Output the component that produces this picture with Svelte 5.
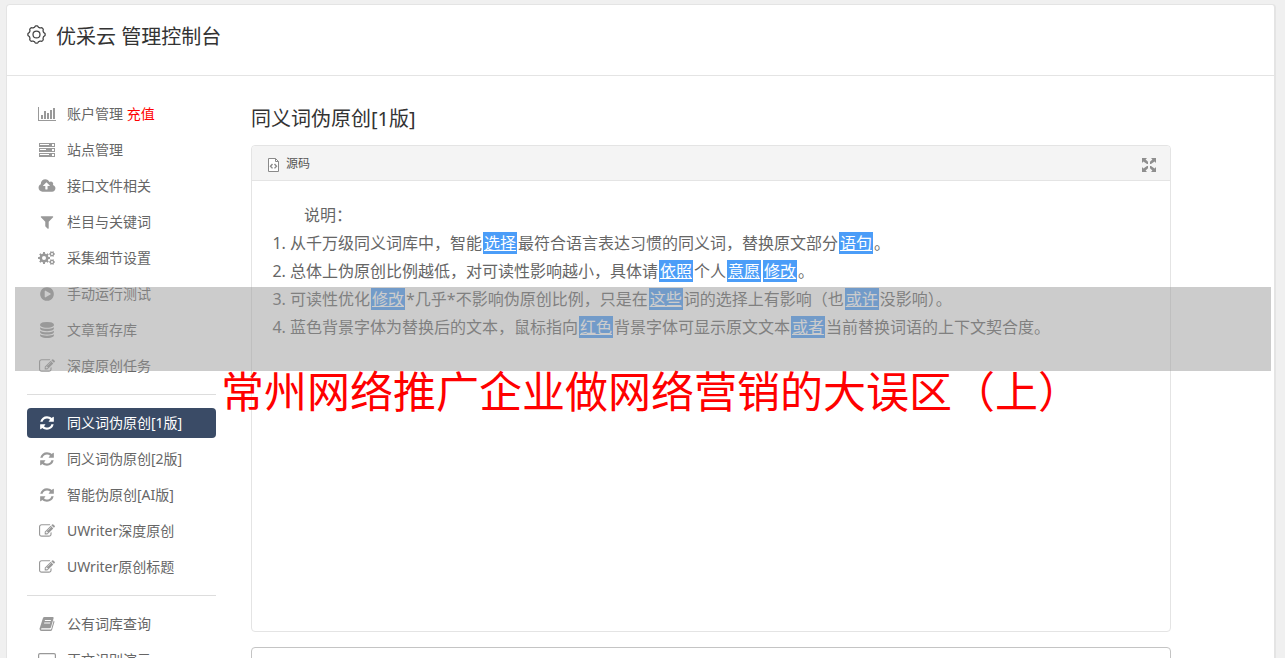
<script lang="ts">
	interface NavItem {
		icon: string;
		label: string;
		tag?: string;
		active?: boolean;
	}

	const groups: NavItem[][] = [
		[
			{ icon: 'chart', label: '账户管理', tag: '充值' },
			{ icon: 'server', label: '站点管理' },
			{ icon: 'upload', label: '接口文件相关' },
			{ icon: 'filter', label: '栏目与关键词' },
			{ icon: 'cogs', label: '采集细节设置' },
			{ icon: 'play', label: '手动运行测试' },
			{ icon: 'database', label: '文章暂存库' },
			{ icon: 'edit', label: '深度原创任务' }
		],
		[
			{ icon: 'refresh', label: '同义词伪原创[1版]', active: true },
			{ icon: 'refresh', label: '同义词伪原创[2版]' },
			{ icon: 'refresh', label: '智能伪原创[AI版]' },
			{ icon: 'edit', label: 'UWriter深度原创' },
			{ icon: 'edit', label: 'UWriter原创标题' }
		],
		[
			{ icon: 'book', label: '公有词库查询' },
			{ icon: 'laptop', label: '正文识别演示' }
		]
	];

	// odd parts are the replaced words
	const notes: string[][] = [
		['从千万级同义词库中，智能', '选择', '最符合语言表达习惯的同义词，替换原文部分', '语句', '。'],
		['总体上伪原创比例越低，对可读性影响越小，具体请', '依照', '个人', '意愿', '', '修改', '。'],
		['可读性优化', '修改', '*几乎*不影响伪原创比例，只是在', '这些', '词的选择上有影响（也', '或许', '没影响）。'],
		['蓝色背景字体为替换后的文本，鼠标指向', '红色', '背景字体可显示原文文本', '或者', '当前替换词语的上下文契合度。']
	];

	const icons: Record<string, { box: string; width: number; d: string }> = {
		chart: {
			box: '0 0 18 16',
			width: 18,
			d: 'M0 1h1v13h17v1H0zM3 9h2v4H3zM6 5h2v8H6zM9 7h2v6H9zM12 4h2v9h-2zM15 2h2v11h-2z'
		},
		server: {
			box: '0 0 16 16',
			width: 16,
			d: 'M0 1h16v4H0zM1 2v1h9V2zM13 2v2h2V2zM0 6h16v4H0zM1 7v1h6V7zM13 7v2h2V7zM0 11h16v4H0zM1 12v1h9v-1zM13 12v2h2v-2z'
		},
		upload: {
			box: '0 0 2048 1792',
			width: 18,
			d: 'M1344 864q0-14-9-23l-352-352q-9-9-23-9t-23 9l-351 351q-10 12-10 24 0 14 9 23t23 9h224v352q0 13 9.5 22.5t22.5 9.5h192q13 0 22.5-9.5t9.5-22.5v-352h224q13 0 22.5-9.5t9.5-22.5zm640 288q0 159-112.5 271.5t-271.5 112.5h-1088q-185 0-316.5-131.5t-131.5-316.5q0-130 70-240t188-165q-2-30-2-43 0-212 150-362t362-150q156 0 285.5 87t188.5 231q71-62 166-62 106 0 181 75t75 181q0 76-41 138 130 31 213.5 135.5t83.5 238.5z'
		},
		filter: {
			box: '0 0 1792 1792',
			width: 16,
			d: 'M1595 295q17 41-14 70l-493 493v742q0 42-39 59-13 5-25 5-27 0-45-19l-256-256q-19-19-19-45v-486l-493-493q-31-29-14-70 17-39 59-39h1280q42 0 59 39z'
		},
		cogs: {
			box: '0 0 18 16',
			width: 18,
			d: [
				cog(6, 8, 6, 8), ring(6, 8, 2),
				cog(14, 4, 3, 6), ring(14, 4, 1),
				cog(14, 12, 3, 6), ring(14, 12, 1)
			].join('')
		},
		play: {
			box: '0 0 1792 1792',
			width: 16,
			d: 'M896 128q209 0 385.5 103t279.5 279.5 103 385.5-103 385.5-279.5 279.5-385.5 103-385.5-103-279.5-279.5-103-385.5 103-385.5 279.5-279.5 385.5-103zm384 823q32-18 32-55t-32-55l-544-320q-31-19-64-1-32 19-32 56v640q0 37 32 56 16 8 32 8 17 0 32-9z'
		},
		database: {
			box: '0 0 1792 1792',
			width: 16,
			d: 'M896 768q237 0 443-43t325-127v170q0 69-103 128t-280 93.5-385 34.5-385-34.5-280-93.5-103-128v-170q119 84 325 127t443 43zm0 768q237 0 443-43t325-127v170q0 69-103 128t-280 93.5-385 34.5-385-34.5-280-93.5-103-128v-170q119 84 325 127t443 43zm0-384q237 0 443-43t325-127v170q0 69-103 128t-280 93.5-385 34.5-385-34.5-280-93.5-103-128v-170q119 84 325 127t443 43zm0-1152q208 0 385 34.5t280 93.5 103 128v128q0 69-103 128t-280 93.5-385 34.5-385-34.5-280-93.5-103-128v-128q0-69 103-128t280-93.5 385-34.5z'
		},
		edit: {
			box: '0 0 1792 1792',
			width: 18,
			d: 'M888 1184l116-116-152-152-116 116v56h96v96h56zm440-720q-16-16-33 1l-350 350q-17 17-1 33t33-1l350-350q17-17 1-33zm80 594v190q0 119-84.5 203.5t-203.5 84.5h-832q-119 0-203.5-84.5t-84.5-203.5v-832q0-119 84.5-203.5t203.5-84.5h832q63 0 117 25 15 7 18 23 3 17-9 29l-49 49q-14 14-32 8-23-6-45-6h-832q-66 0-113 47t-47 113v832q0 66 47 113t113 47h832q66 0 113-47t47-113v-126q0-13 9-22l64-64q15-15 35-7t20 29zm-96-738l288 288-672 672h-288v-288zm444 132l-92 92-288-288 92-92q28-28 68-28t68 28l152 152q28 28 28 68t-28 68z'
		},
		refresh: {
			box: '0 0 1792 1792',
			width: 16,
			d: 'M1639 1056q0 5-1 7-64 268-268 434.5t-478 166.5q-146 0-282.5-55t-243.5-157l-129 129q-19 19-45 19t-45-19-19-45v-448q0-26 19-45t45-19h448q26 0 45 19t19 45-19 45l-137 137q71 66 161 102t187 36q134 0 250-65t186-179q11-17 53-117 8-23 30-23h192q13 0 22.5 9.5t9.5 22.5zm25-800v448q0 26-19 45t-45 19h-448q-26 0-45-19t-19-45 19-45l138-138q-148-137-349-137-134 0-250 65t-186 179q-11 17-53 117-8 23-30 23h-199q-13 0-22.5-9.5t-9.5-22.5v-7q65-268 270-434.5t480-166.5q146 0 284 55.5t245 156.5l130-129q19-19 45-19t45 19 19 45z'
		},
		book: {
			box: '0 0 16 16',
			width: 16,
			d: 'M5.5 1h8.2q1.2 0 .9 1.2L12 11.3q-.3 1-1.4 1H3q-1 0-1 .6t1 .7h8.5q.6 0 .8-.6l2.4-8.5q1 .5.7 1.5l-2.3 7.8q-.4 1.2-1.6 1.2H2.6Q.5 15 .5 12.8L3.8 2.4Q4.2 1 5.500 1zM6 4l-.3 1h6l.3-1zM5.3 6.5l-.3 1h6l.3-1z'
		},
		laptop: {
			box: '0 0 18 16',
			width: 18,
			d: 'M2 1h14q2 0 2 2v8q0 2-2 2H2q-2 0-2-2V3q0-2 2-2zM2 2.2q-.8 0-.8.8v8q0 .8.8.8h14q.8 0 .8-.8V3q0-.8-.8-.8z'
		}
	};

	function point(cx: number, cy: number, r: number, a: number): string {
		return `${(cx + r * Math.cos(a)).toFixed(2)} ${(cy + r * Math.sin(a)).toFixed(2)}`;
	}

	function cog(cx: number, cy: number, r: number, teeth: number): string {
		const step = (Math.PI * 2) / teeth;
		const pts: string[] = [];
		for (let i = 0; i < teeth; i++) {
			const a = i * step;
			pts.push(point(cx, cy, r * 0.76, a - step * 0.28));
			pts.push(point(cx, cy, r, a - step * 0.2));
			pts.push(point(cx, cy, r, a + step * 0.2));
			pts.push(point(cx, cy, r * 0.76, a + step * 0.28));
		}
		return 'M' + pts.join('L') + 'z';
	}

	function ring(cx: number, cy: number, r: number): string {
		return `M${cx - r} ${cy}a${r} ${r} 0 1 0 ${r * 2} 0a${r} ${r} 0 1 0 ${-r * 2} 0z`;
	}

	// soft eight-lobed outline of the title gear
	function lobes(cx: number, cy: number, r: number): string {
		const pts: string[] = [];
		for (let i = 0; i < 96; i++) {
			const a = (i / 96) * Math.PI * 2;
			pts.push(point(cx, cy, r + 0.6 * Math.tanh(2 * Math.cos(8 * a)), a));
		}
		return 'M' + pts.join('L') + 'z';
	}

	let source = $state('');
</script>

<div class="page">
	<div class="card">
		<header>
			<svg class="gear" viewBox="0 0 18 18" width="19" height="19" aria-hidden="true">
				<path d={lobes(9, 9, 7.6)} />
				<circle cx="9" cy="9" r="3.3" />
			</svg>
			<h1>优采云 管理控制台</h1>
		</header>

		<div class="columns">
			<nav>
				{#each groups as group}
					<ul>
						{#each group as item}
							<li>
								<a href="#top" class:active={item.active}>
									<span class="icon">
										<svg viewBox={icons[item.icon].box} width={icons[item.icon].width} height="16" aria-hidden="true">
											<path d={icons[item.icon].d} fill="currentColor" fill-rule="evenodd" />
										</svg>
									</span>
									<span class="label">{item.label}{#if item.tag}&nbsp;<em>{item.tag}</em>{/if}</span>
								</a>
							</li>
						{/each}
					</ul>
				{/each}
			</nav>

			<main>
				<h2>同义词伪原创[1版]</h2>
				<section class="panel">
					<div class="toolbar">
						<button type="button">
							<svg viewBox="0 0 11 14" width="11" height="14" fill="none" stroke="#8a8a8a" aria-hidden="true">
								<path d="M.5.5h7l3 3v10H.5z" fill="#fff" />
								<path d="M7.5.5v3h3" />
								<path d="M4.5 6L2.5 8.2l2 2.2M6.5 6l2 2.2-2 2.2" stroke-width="1.4" />
							</svg>
							源码
						</button>
						<button type="button" aria-label="全屏">
							<svg viewBox="0 0 14 14" width="14" height="14" fill="#8e8e8e" aria-hidden="true">
								<path d="M0 0h5L3.6 1.4 6 3.8V6H5L1.4 3.6 0 5z" />
								<path d="M14 0H9l1.4 1.4L8 3.8V6h1l3.6-2.4L14 5z" />
								<path d="M0 14h5l-1.4-1.4L6 10.2V8H5l-3.6 2.4L0 9z" />
								<path d="M14 14H9l1.4-1.4L8 10.2V8h1l3.6 2.4L14 9z" />
							</svg>
						</button>
					</div>
					<div class="content">
						<p>说明：</p>
						<ol>
							{#each notes as parts}
								<li>{#each parts as part, i}{#if i % 2}<mark>{part}</mark>{:else}{part}{/if}{/each}</li>
							{/each}
						</ol>
					</div>
				</section>
				<textarea aria-label="原文" bind:value={source}></textarea>
			</main>
		</div>
	</div>

	<div class="banner">
		<div class="shade"></div>
		<p>常州网络推广企业做网络营销的大误区（上）</p>
	</div>
</div>

<style>
	:global(body) {
		margin: 0;
		background: #f0f0f0;
	}

	.page {
		position: relative;
		box-sizing: border-box;
		height: 100vh;
		overflow: hidden;
		padding: 4px 9px 0 6px;
		font-family: 'Noto Sans', 'Noto Sans CJK SC', sans-serif;
		font-size: 14px;
		color: #666;
	}

	.card {
		background: #fff;
		border: 1px solid #e4e4e4;
		border-right-width: 2px;
		border-radius: 4px;
	}

	header {
		display: flex;
		align-items: flex-start;
		gap: 10px;
		height: 50px;
		padding: 20px 20px 0;
		border-bottom: 1px solid #e4e4e4;
	}

	.gear {
		fill: none;
		stroke: #444;
		stroke-width: 1.2;
	}

	h1,
	h2 {
		margin: 0;
		font-size: 20px;
		font-weight: 400;
		line-height: 24px;
		color: #333;
	}

	.columns {
		display: flex;
		align-items: flex-start;
		gap: 35px;
		padding: 23px 103px 0 20px;
	}

	nav {
		flex: 0 0 189px;
	}

	ul {
		display: flex;
		flex-direction: column;
		gap: 6px;
		margin: 0;
		padding: 0;
		list-style: none;
	}

	ul + ul {
		margin-top: 13px;
		padding-top: 13px;
		border-top: 1px solid #ddd;
	}

	nav a {
		display: flex;
		align-items: center;
		gap: 10px;
		height: 30px;
		padding-left: 10px;
		border-radius: 4px;
		color: #666;
		text-decoration: none;
	}

	nav a.active {
		background: #3a4b66;
		color: #fff;
	}

	nav em {
		font-style: normal;
		color: #f00;
	}

	.icon {
		display: flex;
		justify-content: center;
		width: 20px;
		color: #999;
	}

	.active .icon {
		color: #fff;
	}

	.label {
		padding-bottom: 2px;
	}

	main {
		flex: 1;
		min-width: 0;
	}

	h2 {
		padding: 8px 0 14px;
	}

	.panel {
		min-height: 485px;
		border: 1px solid #e4e4e4;
		border-radius: 4px;
	}

	.toolbar {
		display: flex;
		justify-content: space-between;
		align-items: center;
		height: 34px;
		padding: 0 14px 0 16px;
		background: #f4f4f4;
		border-bottom: 1px solid #e4e4e4;
		border-radius: 4px 4px 0 0;
	}

	button {
		display: flex;
		align-items: center;
		gap: 7px;
		padding: 0;
		border: 0;
		background: none;
		font: inherit;
		font-size: 12px;
		color: #555;
	}

	button svg {
		padding-top: 3px;
	}

	.content {
		padding: 20px;
		font-size: 16px;
		line-height: 28px;
	}

	.content p {
		margin: 0;
		text-indent: 2em;
	}

	ol {
		margin: 0;
		padding-left: 18px;
	}

	mark {
		margin: 0 1px;
		padding: 0 1px;
		background: #4b9df8;
		color: #fff;
		text-decoration: underline;
	}

	textarea {
		display: block;
		box-sizing: border-box;
		width: 100%;
		height: 120px;
		margin-top: 15px;
		border: 1px solid #c4c4c4;
		border-radius: 4px;
		resize: none;
	}

	/* floats over the whole console */
	.banner {
		position: absolute;
		top: 287px;
		left: 15px;
		right: 14px;
		pointer-events: none;
	}

	.shade {
		height: 84px;
		background: rgba(153, 153, 153, 0.5);
	}

	.banner p {
		margin: 0;
		padding-left: 206px;
		font-size: 43px;
		line-height: 42px;
		white-space: nowrap;
		color: #f00;
	}
</style>
